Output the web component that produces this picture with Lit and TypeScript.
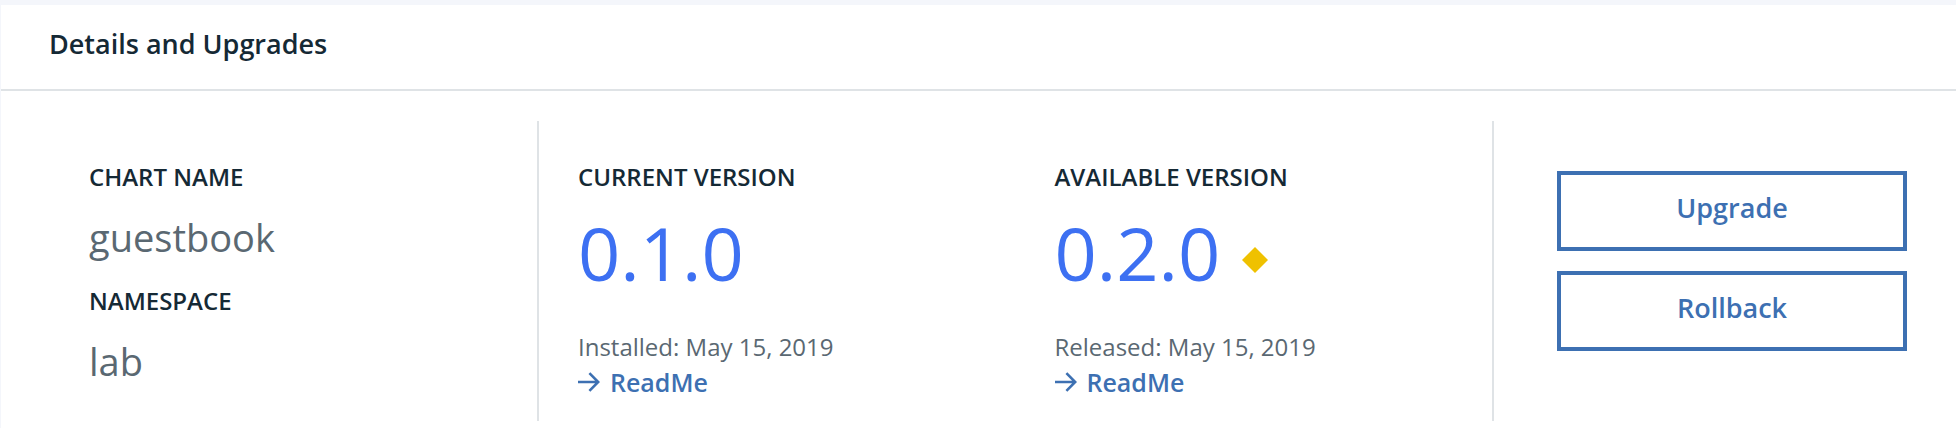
import { LitElement, html, css, nothing } from 'lit';
import { customElement, property } from 'lit/decorators.js';

@customElement('chart-version')
export class ChartVersion extends LitElement {
  @property() label = '';
  @property() version = '';
  @property() date = '';
  @property({ type: Boolean }) outdated = false;

  static styles = css`
    :host {
      display: block;
      padding-left: 39px;
    }
    .label {
      margin: 0 0 20px;
      font-size: 24px;
      font-weight: 600;
      line-height: 32px;
      text-transform: uppercase;
      color: #152935;
    }
    .number {
      display: flex;
      align-items: center;
      gap: 22px;
      margin: 0 0 38px;
      font-size: 74px;
      line-height: 80px;
      color: #3d70f2;
    }
    .badge {
      width: 26px;
      height: 26px;
      margin-top: 14px;
      fill: #efc100;
    }
    .date {
      margin: 0;
      font-size: 24px;
      line-height: 32px;
      color: #5a6872;
    }
    .readme {
      display: flex;
      align-items: center;
      gap: 10px;
      width: fit-content;
      font-size: 25px;
      font-weight: 600;
      line-height: 38px;
      color: #3d70b2;
      text-decoration: none;
    }
    .readme:hover {
      text-decoration: underline;
    }
    .arrow {
      width: 22px;
      height: 20px;
      fill: none;
      stroke: currentColor;
      stroke-width: 2.6;
    }
  `;

  render() {
    return html`
      <h3 class="label">${this.label}</h3>
      <p class="number">
        ${this.version}
        ${this.outdated
          ? html`<svg class="badge" viewBox="0 0 26 26" aria-hidden="true">
              <path d="M13 0 26 13 13 26 0 13z" />
            </svg>`
          : nothing}
      </p>
      <p class="date">${this.date}</p>
      <a class="readme" href="#readme">
        <svg class="arrow" viewBox="0 0 22 20" aria-hidden="true">
          <path d="M0 10H20M11.4 1.2 20.2 10 11.4 18.8" />
        </svg>
        ReadMe
      </a>
    `;
  }
}

@customElement('app-root')
export class AppRoot extends LitElement {
  static styles = css`
    :host {
      display: block;
      box-sizing: border-box;
      min-height: 100vh;
      padding: 5px 0 0 1px;
      background: linear-gradient(#fff, #fff) content-box, #f4f6fb;
      font-family: 'Open Sans', 'Noto Sans', sans-serif;
    }
    .header {
      padding: 21px 48px 27px;
      border-bottom: 2px solid #dfe3e6;
    }
    .title {
      margin: 0;
      font-size: 27px;
      font-weight: 600;
      line-height: 36px;
      color: #152935;
    }
    .body {
      display: grid;
      grid-template-columns: 538fr 955fr 462fr;
      padding: 30px 0 6px;
    }
    .pane {
      box-sizing: border-box;
      padding: 40px 0 20px;
    }
    .divided {
      border-right: 2px solid #dfe3e6;
    }
    .facts {
      display: flex;
      flex-direction: column;
      gap: 24px;
      margin: 0;
      padding-left: 88px;
    }
    .fact {
      display: flex;
      flex-direction: column;
      gap: 20px;
    }
    .term {
      font-size: 24px;
      font-weight: 600;
      line-height: 32px;
      text-transform: uppercase;
      color: #152935;
    }
    .value {
      margin: 0;
      font-size: 38px;
      line-height: 48px;
      color: #5a6872;
    }
    .versions {
      display: grid;
      grid-template-columns: 1fr 1fr;
    }
    .actions {
      display: flex;
      flex-direction: column;
      gap: 20px;
      padding: 50px 49px 20px 63px;
    }
    .action {
      height: 80px;
      padding: 0 0 6px;
      border: 4px solid #3d70b2;
      background: transparent;
      font-family: inherit;
      font-size: 27px;
      font-weight: 600;
      line-height: 36px;
      color: #3d70b2;
      cursor: pointer;
    }
  `;

  render() {
    return html`
      <header class="header"><h2 class="title">Details and Upgrades</h2></header>
      <div class="body">
        <section class="pane divided">
          <dl class="facts">
            <div class="fact"><dt class="term">Chart name</dt><dd class="value">guestbook</dd></div>
            <div class="fact"><dt class="term">Namespace</dt><dd class="value">lab</dd></div>
          </dl>
        </section>
        <section class="pane divided versions">
          <chart-version label="Current version" version="0.1.0" date="Installed: May 15, 2019"></chart-version>
          <chart-version label="Available version" version="0.2.0" date="Released: May 15, 2019" outdated></chart-version>
        </section>
        <section class="pane actions">
          <button class="action" type="button">Upgrade</button>
          <button class="action" type="button">Rollback</button>
        </section>
      </div>
    `;
  }
}
